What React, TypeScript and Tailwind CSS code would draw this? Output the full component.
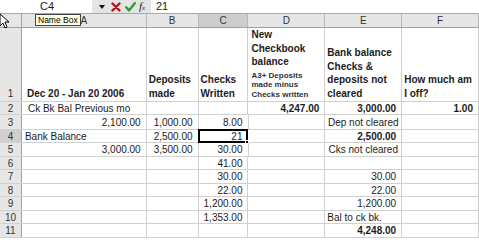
import React from 'react';

type Cell = { t?: string; a?: 'l' | 'r' | 'c'; b?: boolean; pl?: string };

// column widths: row header, A..F
const colClass = ['w-[22px]', 'w-[125px]', 'w-[52px]', 'w-[50px]', 'w-[77px]', 'w-[77px]', 'w-[77px]'];
const letters = ['A', 'B', 'C', 'D', 'E', 'F'];

const rows: { n: number; h: string; cells: Cell[] }[] = [
  {
    n: 2,
    h: 'h-[13px]',
    cells: [
      { t: 'Ck Bk Bal Previous mo', pl: 'pl-[6px]' },
      {},
      {},
      { t: '4,247.00', a: 'r', b: true },
      { t: '3,000.00', a: 'r', b: true },
      { t: '1.00', a: 'r', b: true },
    ],
  },
  {
    n: 3,
    h: 'h-[15px]',
    cells: [{ t: '2,100.00', a: 'r' }, { t: '1,000.00', a: 'r' }, { t: '8.00', a: 'r' }, {}, { t: 'Dep not cleared', a: 'c' }, {}],
  },
  {
    n: 4,
    h: 'h-[13px]',
    cells: [{ t: 'Bank Balance', pl: 'pl-[3px]' }, { t: '2,500.00', a: 'r' }, {}, {}, { t: '2,500.00', a: 'r', b: true }, {}],
  },
  {
    n: 5,
    h: 'h-[14px]',
    cells: [{ t: '3,000.00', a: 'r' }, { t: '3,500.00', a: 'r' }, { t: '30.00', a: 'r' }, {}, { t: 'Cks not cleared', a: 'c' }, {}],
  },
  { n: 6, h: 'h-[13px]', cells: [{}, {}, { t: '41.00', a: 'r' }, {}, {}, {}] },
  { n: 7, h: 'h-[14px]', cells: [{}, {}, { t: '30.00', a: 'r' }, {}, { t: '30.00', a: 'r' }, {}] },
  { n: 8, h: 'h-[13px]', cells: [{}, {}, { t: '22.00', a: 'r' }, {}, { t: '22.00', a: 'r' }, {}] },
  { n: 9, h: 'h-[14px]', cells: [{}, {}, { t: '1,200.00', a: 'r' }, {}, { t: '1,200.00', a: 'r' }, {}] },
  { n: 10, h: 'h-[13px]', cells: [{}, {}, { t: '1,353.00', a: 'r' }, {}, { t: 'Bal to ck bk.' }, {}] },
  { n: 11, h: 'h-[14px]', cells: [{}, {}, {}, {}, { t: '4,248.00', a: 'r', b: true }, {}] },
];

const alignClass = (c: Cell) =>
  c.a === 'r' ? 'justify-end pr-[5px]' : c.a === 'c' ? 'justify-center' : c.pl ?? 'pl-[2px]';

const Cursor = () => (
  <svg className="absolute left-[-1px] top-[13px]" width="10" height="16" viewBox="0 0 10 16">
    <path d="M1 1 L1 13 L4 10 L6 15 L8 14 L6 9 L10 9 Z" fill="#fff" stroke="#000" strokeWidth="1" />
  </svg>
);

export default function App() {
  return (
    <div className="relative w-[479px] h-[240px] overflow-hidden bg-white font-['Liberation_Sans',Arial,sans-serif] text-[10px] text-[#1c1c1c]">
      {/* formula bar */}
      <div className="flex h-[14px] border-b border-[#a8a8a8]">
        <div className="w-[92px] flex items-center pl-[40px] text-[11px]">C4</div>
        <div className="w-[59px] bg-[#e4e4e4] flex items-center pl-[5px]">
          <svg width="6" height="4" viewBox="0 0 6 4" className="ml-[2px]">
            <path d="M0 0 H6 L3 4 Z" fill="#111" />
          </svg>
          <svg width="10" height="10" viewBox="0 0 10 10" className="ml-[6px]">
            <path d="M1.5 1.5 L8.5 8.5 M8.5 1.5 L1.5 8.5" stroke="#b5121b" strokeWidth="2.4" strokeLinecap="round" />
          </svg>
          <svg width="11" height="10" viewBox="0 0 11 10" className="ml-[4px]">
            <path d="M1.2 5.2 L4 8.4 L9.8 1.2" fill="none" stroke="#2e9d3a" strokeWidth="2.4" strokeLinecap="round" strokeLinejoin="round" />
          </svg>
          <span className="ml-[3px] italic font-['Liberation_Serif',serif] text-[11px] leading-none">
            f<span className="text-[7px]">x</span>
          </span>
        </div>
        <div className="flex-1 flex items-center pl-[5px] text-[11px]">21</div>
      </div>

      {/* column headers */}
      <div className="flex h-[14px] bg-[#e6e6e6] border-b border-[#a0a0a0]">
        <div className={`${colClass[0]} border-r border-[#a0a0a0]`} />
        {letters.map((l, i) => (
          <div
            key={l}
            className={`${colClass[i + 1]} flex items-center justify-center border-r border-[#b8b8b8] text-[#333] ${
              l === 'C' ? 'bg-[#cdcdcd]' : ''
            }`}
          >
            {l}
          </div>
        ))}
      </div>

      {/* row 1: titles */}
      <div className="flex h-[74px] border-b border-[#d0d0d0] font-bold leading-[13.5px]">
        <div className="w-[22px] bg-[#e6e6e6] border-r border-[#a0a0a0] flex items-end justify-center pb-[1px] font-normal text-[#333]">
          1
        </div>
        <div className="w-[125px] border-r border-[#d0d0d0] flex items-end pl-[5px] pb-[1px]">Dec 20 - Jan 20 2006</div>
        <div className="w-[52px] border-r border-[#d0d0d0] flex items-end pl-[2px] pb-[1px]">
          Deposits
          <br />
          made
        </div>
        <div className="w-[50px] border-r border-[#d0d0d0] flex items-end pl-[2px] pb-[1px]">
          Checks
          <br />
          Written
        </div>
        <div className="w-[77px] border-r border-[#d0d0d0] flex flex-col justify-end pl-[3px] pb-[2px]">
          <div>New</div>
          <div>Checkbook</div>
          <div>balance</div>
          <div className="text-[8px] leading-[9.5px] text-[#333] mt-[2px]">
            <div>A3+ Deposits</div>
            <div>made minus</div>
            <div>Checks written</div>
          </div>
        </div>
        <div className="w-[77px] border-r border-[#d0d0d0] flex flex-col justify-end pl-[2px] pb-[1px]">
          <div>Bank balance</div>
          <div>Checks &amp;</div>
          <div>deposits not</div>
          <div>cleared</div>
        </div>
        <div className="w-[77px] border-r border-[#d0d0d0] flex flex-col justify-end pl-[2px] pb-[1px]">
          <div>How much am</div>
          <div>I off?</div>
        </div>
      </div>

      {/* data rows */}
      {rows.map((r) => (
        <div key={r.n} className={`flex ${r.h} border-b border-[#d0d0d0]`}>
          <div
            className={`w-[22px] border-r border-[#a0a0a0] flex items-center justify-center text-[#333] ${
              r.n === 4 ? 'bg-[#cfcfcf]' : 'bg-[#e6e6e6]'
            }`}
          >
            {r.n}
          </div>
          {r.cells.map((c, i) => {
            const selected = r.n === 4 && i === 2;
            return (
              <div
                key={i}
                className={`${colClass[i + 1]} relative flex items-center whitespace-nowrap border-r border-[#d0d0d0] ${alignClass(c)} ${
                  c.b ? 'font-bold' : ''
                }`}
              >
                {c.t}
                {selected && (
                  <div className="absolute inset-[-1px] border-2 border-black flex items-center justify-end pr-[4px] bg-white">
                    21
                    <div className="absolute right-[-3px] bottom-[-3px] w-[4px] h-[4px] bg-black border border-white" />
                  </div>
                )}
              </div>
            );
          })}
        </div>
      ))}

      {/* tooltip over the headers */}
      <div className="absolute left-[35px] top-[14px] h-[12px] px-[2px] flex items-center whitespace-nowrap bg-[#ffffe1] border border-[#444] text-[8.5px] leading-none text-black">
        Name Box
      </div>
      <Cursor />
    </div>
  );
}
